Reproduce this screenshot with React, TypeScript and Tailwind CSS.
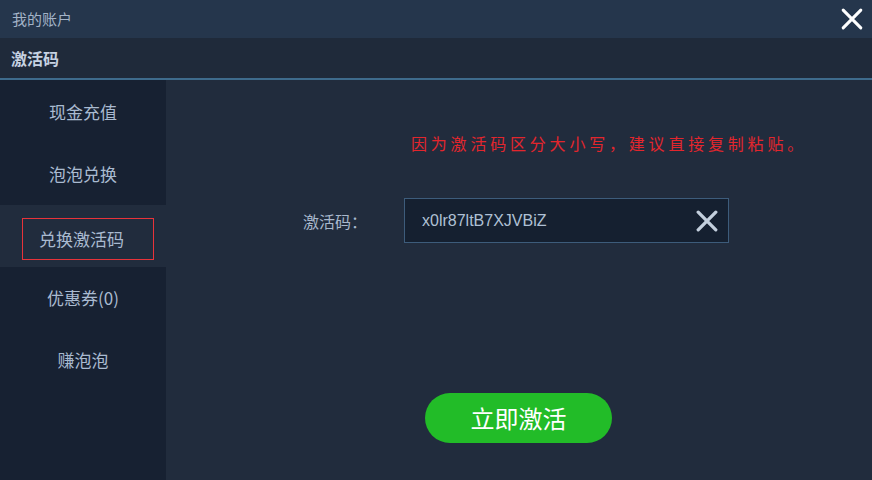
const menu = ["现金充值", "泡泡兑换", "兑换激活码", "优惠券(0)", "赚泡泡"];

function Cross({ size, stroke, className }: { size: number; stroke: number; className: string }) {
  return (
    <svg width={size} height={size} viewBox="0 0 20 20" className={className}>
      <path d="M2 2 L18 18 M18 2 L2 18" stroke="currentColor" strokeWidth={stroke} strokeLinecap="round" />
    </svg>
  );
}

export default function App() {
  return (
    <div
      className="flex h-[480px] w-[872px] flex-col overflow-hidden bg-[#212c3d]"
      style={{ fontFamily: '"Microsoft YaHei", "Noto Sans CJK SC", sans-serif' }}
    >
      <div className="flex h-[38px] shrink-0 items-center justify-between bg-[#25364c] pl-3 pr-[9px]">
        <span className="text-[15px] text-[#a3b3c7]">我的账户</span>
        <Cross size={22} stroke={2.8} className="text-white" />
      </div>

      <div className="flex h-[42px] shrink-0 items-center border-b-2 border-[#3e6b8c] bg-[#1f2a3a] pl-[11px]">
        <span className="text-[16px] font-bold text-[#c6d2e2]">激活码</span>
      </div>

      <div className="flex flex-1">
        <aside className="flex w-[166px] shrink-0 flex-col bg-[#172132] pt-[1px]">
          {menu.map((item) =>
            item === "兑换激活码" ? (
              <div key={item} className="flex h-[62px] items-start bg-[#212c3d] pt-[13px] pl-[22px]">
                <div className="flex h-[42px] w-[132px] items-center border border-[#e8333a] pl-4 text-[17px] text-[#a9bad0]">
                  {item}
                </div>
              </div>
            ) : (
              <div key={item} className="flex h-[62px] items-center justify-center text-[17px] text-[#a9bad0]">
                {item}
              </div>
            )
          )}
        </aside>

        <main className="flex flex-1 flex-col">
          <p
            className="mt-[51px] ml-[245px] text-[16px] tracking-[3.8px] text-[#e3262d]"
            style={{ fontFamily: '"SimSun", "Noto Sans CJK SC", serif' }}
          >
            因为激活码区分大小写，建议直接复制粘贴。
          </p>

          <div className="mt-[43px] ml-[137px] flex items-center">
            <span className="w-[101px] text-[16px] text-[#a8b8cc]">激活码：</span>
            <div className="flex h-[45px] w-[325px] items-center justify-between border border-[#3d5c7b] bg-[#152030] pl-[17px] pr-[10px]">
              <span className="text-[16px] text-[#afc0d5]" style={{ fontFamily: "Arial, 'Liberation Sans', sans-serif" }}>
                x0lr87ltB7XJVBiZ
              </span>
              <Cross size={22} stroke={3} className="text-[#c3cfdd]" />
            </div>
          </div>

          <div className="mt-[150px] ml-[259px]">
            <button className="flex h-[50px] w-[187px] items-center justify-center rounded-full bg-[#22bc28] text-[24px] text-white">
              立即激活
            </button>
          </div>
        </main>
      </div>
    </div>
  );
}
